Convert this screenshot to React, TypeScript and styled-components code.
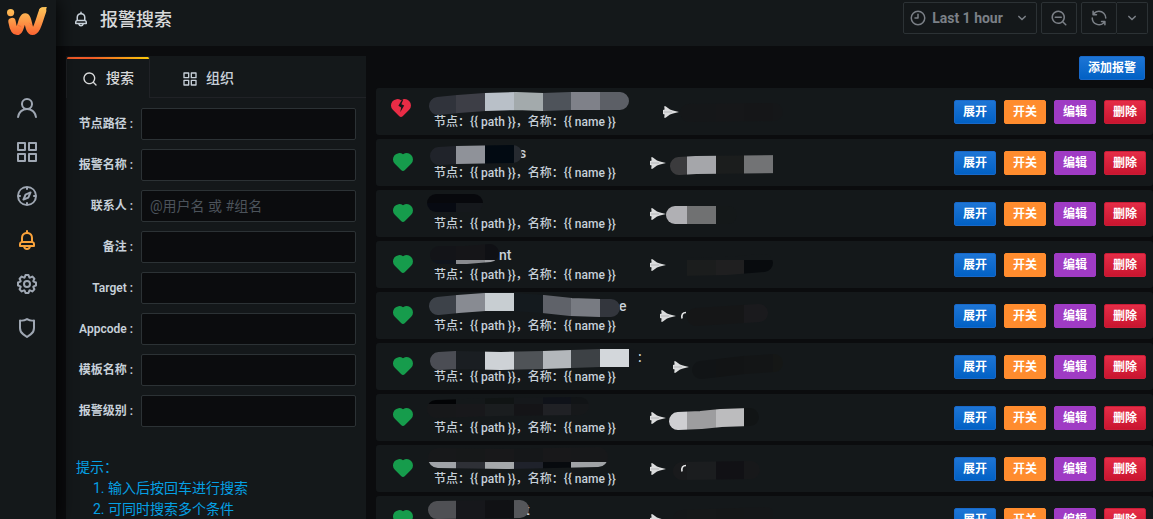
import React, { useId } from 'react';
import styled, { createGlobalStyle } from 'styled-components';

const GlobalStyle = createGlobalStyle`
  *, *::before, *::after { box-sizing: border-box; }
  html, body, #root { height: 100%; }
  body {
    margin: 0;
    overflow: hidden;
    background: #0b0c0e;
    color: #c7d0d9;
    font-family: Roboto, "Noto Sans CJK SC", sans-serif;
    font-size: 14px;
    line-height: 21px;
  }
  button, input { font: inherit; color: inherit; }
`;

/* ---------- icons ---------- */

const icons = {
  user: 'M15.71,12.71a6,6,0,1,0-7.42,0,10,10,0,0,0-6.22,8.18,1,1,0,0,0,2,.22,8,8,0,0,1,15.9,0,1,1,0,0,0,1,.89h.11a1,1,0,0,0,.88-1.1A10,10,0,0,0,15.71,12.71ZM12,12a4,4,0,1,1,4-4A4,4,0,0,1,12,12Z',
  apps: 'M10,13H3a1,1,0,0,0-1,1v7a1,1,0,0,0,1,1h7a1,1,0,0,0,1-1V14A1,1,0,0,0,10,13ZM9,20H4V15H9ZM21,2H14a1,1,0,0,0-1,1v7a1,1,0,0,0,1,1h7a1,1,0,0,0,1-1V3A1,1,0,0,0,21,2ZM20,9H15V4h5Zm1,4H14a1,1,0,0,0-1,1v7a1,1,0,0,0,1,1h7a1,1,0,0,0,1-1V14A1,1,0,0,0,21,13Zm-1,7H15V15h5ZM10,2H3A1,1,0,0,0,2,3v7a1,1,0,0,0,1,1h7a1,1,0,0,0,1-1V3A1,1,0,0,0,10,2ZM9,9H4V4H9Z',
  compass:
    'M12,2A10,10,0,1,0,22,12,10,10,0,0,0,12,2Zm1,17.93V19a1,1,0,0,0-2,0v.93A8,8,0,0,1,4.07,13H5a1,1,0,0,0,0-2H4.07A8,8,0,0,1,11,4.07V5a1,1,0,0,0,2,0V4.07A8,8,0,0,1,19.93,11H19a1,1,0,0,0,0,2h.93A8,8,0,0,1,13,19.93ZM15.14,7.55l-5,2.12a1,1,0,0,0-.52.52l-2.12,5a1,1,0,0,0,.21,1.1,1,1,0,0,0,.7.3.93.93,0,0,0,.4-.09l5-2.12a1,1,0,0,0,.52-.52l2.12-5a1,1,0,0,0-1.31-1.31Zm-2.49,5.1-2.28,1,1-2.28,2.28-1Z',
  bell: 'M18,13.18V10a6,6,0,0,0-5-5.91V3a1,1,0,0,0-2,0V4.09A6,6,0,0,0,6,10v3.18A3,3,0,0,0,4,16v2a1,1,0,0,0,1,1H8.14a4,4,0,0,0,7.72,0H19a1,1,0,0,0,1-1V16A3,3,0,0,0,18,13.18ZM8,10a4,4,0,0,1,8,0v3H8Zm4,10a2,2,0,0,1-1.72-1h3.44A2,2,0,0,1,12,20Zm6-3H6V16a1,1,0,0,1,1-1H17a1,1,0,0,1,1,1Z',
  cog: 'M21.32,9.55l-1.89-.63.89-1.78A1,1,0,0,0,20.13,6L18,3.87a1,1,0,0,0-1.15-.19l-1.78.89-.63-1.89A1,1,0,0,0,13.5,2h-3a1,1,0,0,0-.95.68L8.92,4.57,7.14,3.68A1,1,0,0,0,6,3.87L3.87,6a1,1,0,0,0-.19,1.15l.89,1.78-1.89.63A1,1,0,0,0,2,10.5v3a1,1,0,0,0,.68.95l1.89.63-.89,1.78A1,1,0,0,0,3.87,18L6,20.13a1,1,0,0,0,1.15.19l1.78-.89.63,1.89a1,1,0,0,0,.95.68h3a1,1,0,0,0,.95-.68l.63-1.89,1.78.89A1,1,0,0,0,18,20.13L20.13,18a1,1,0,0,0,.19-1.15l-.89-1.78,1.89-.63A1,1,0,0,0,22,13.5v-3A1,1,0,0,0,21.32,9.55ZM20,12.78l-1.2.4A2,2,0,0,0,17.64,16l.57,1.14-1.1,1.1L16,17.64a2,2,0,0,0-2.79,1.16l-.4,1.2H11.22l-.4-1.2A2,2,0,0,0,8,17.64l-1.14.57-1.1-1.1L6.36,16A2,2,0,0,0,5.2,13.18L4,12.78V11.22l1.2-.4A2,2,0,0,0,6.36,8L5.79,6.89l1.1-1.1L8,6.36A2,2,0,0,0,10.82,5.2l.4-1.2h1.56l.4,1.2A2,2,0,0,0,16,6.36l1.14-.57,1.1,1.1L17.64,8a2,2,0,0,0,1.16,2.79l1.2.4ZM12,8a4,4,0,1,0,4,4A4,4,0,0,0,12,8Zm0,6a2,2,0,1,1,2-2A2,2,0,0,1,12,14Z',
  shield:
    'M19.63,3.65a1,1,0,0,0-.84-.2,8,8,0,0,1-6.22-1.27,1,1,0,0,0-1.14,0A8,8,0,0,1,5.21,3.45a1,1,0,0,0-.84.2A1,1,0,0,0,4,4.43v7.45a9,9,0,0,0,3.77,7.33l3.65,2.6a1,1,0,0,0,1.16,0l3.65-2.6A9,9,0,0,0,20,11.88V4.43A1,1,0,0,0,19.63,3.65ZM18,11.88a7,7,0,0,1-2.93,5.7L12,19.77,8.93,17.58A7,7,0,0,1,6,11.88V5.58a10,10,0,0,0,6-1.39,10,10,0,0,0,6,1.39Z',
  search:
    'M21.71,20.29,18,16.61A9,9,0,1,0,16.61,18l3.68,3.68a1,1,0,0,0,1.42,0A1,1,0,0,0,21.71,20.29ZM11,18a7,7,0,1,1,7-7A7,7,0,0,1,11,18Z',
  searchMinus:
    'M21.71,20.29,18,16.61A9,9,0,1,0,16.61,18l3.68,3.68a1,1,0,0,0,1.42,0A1,1,0,0,0,21.71,20.29ZM11,18a7,7,0,1,1,7-7A7,7,0,0,1,11,18Zm4-8H7a1,1,0,0,0,0,2h8a1,1,0,0,0,0-2Z',
  clock:
    'M12,2A10,10,0,1,0,22,12,10,10,0,0,0,12,2Zm0,18a8,8,0,1,1,8-8A8,8,0,0,1,12,20ZM12,6a1,1,0,0,0-1,1v4H8a1,1,0,0,0,0,2h4a1,1,0,0,0,1-1V7A1,1,0,0,0,12,6Z',
  angleDown:
    'M17,9.17a1,1,0,0,0-1.41,0L12,12.71,8.46,9.17a1,1,0,0,0-1.41,0,1,1,0,0,0,0,1.42l4.24,4.24a1,1,0,0,0,1.42,0L17,10.59A1,1,0,0,0,17,9.17Z',
  sync: 'M19.91,15.51H15.38a1,1,0,0,0,0,2h2.4A8,8,0,0,1,4,12a1,1,0,0,0-2,0,10,10,0,0,0,16.88,7.23V21a1,1,0,0,0,2,0V16.5A1,1,0,0,0,19.91,15.51ZM12,2A10,10,0,0,0,5.12,4.77V3a1,1,0,0,0-2,0V7.5a1,1,0,0,0,1,1h4.5a1,1,0,0,0,0-2H6.22A8,8,0,0,1,20,12a1,1,0,0,0,2,0A10,10,0,0,0,12,2Z',
  heart:
    'M20.16,5A6.29,6.29,0,0,0,12,4.36a6.27,6.27,0,0,0-8.16,9.48l6.21,6.22a2.78,2.78,0,0,0,3.9,0l6.21-6.22A6.27,6.27,0,0,0,20.16,5Z',
};

type IconName = keyof typeof icons;

const IconSvg = styled.svg`
  display: block;
  flex: none;
  fill: currentColor;
`;

const Icon = ({ name, size }: { name: IconName; size: number }) => (
  <IconSvg width={size} height={size} viewBox="0 0 24 24" aria-hidden="true">
    <path d={icons[name]} />
  </IconSvg>
);

const Logo = () => (
  <IconSvg width="42" height="32" viewBox="0 0 42 32" role="img" aria-label="logo">
    <defs>
      <linearGradient id="logo-fill" gradientUnits="userSpaceOnUse" x1="0" y1="0" x2="0" y2="30">
        <stop offset="0" stopColor="#fcc85a" />
        <stop offset="0.5" stopColor="#fd9a48" />
        <stop offset="1" stopColor="#fb5f30" />
      </linearGradient>
    </defs>
    <circle cx="4.6" cy="6.6" r="3.6" fill="url(#logo-fill)" />
    <path
      fill="none"
      stroke="url(#logo-fill)"
      strokeWidth="7.4"
      strokeLinecap="round"
      strokeLinejoin="round"
      d="M6 15.600 C7 22 8.500 25.400 11 25.400 C15 25.400 15.500 11 19.200 11 C22.800 11 22 25.400 26.400 25.400 C31 25.400 33 15 36.600 5"
    />
    <path fill="url(#logo-fill)" d="M33 4 C34 1.400 37 0.800 40.800 1 L38.500 9 Z" />
    <path d="M11 19.500 Q14 18.500 16 21.500 Q14 20.500 11 19.500Z M22.500 16.500 Q25 20 28.500 20.500 Q25 18.500 22.500 16.500Z" fill="#f4552a" opacity="0.6" />
  </IconSvg>
);

const BrokenHeart = () => (
  <IconSvg width="24" height="24" viewBox="0 0 24 24" role="img" aria-label="异常">
    <path d={icons.heart} />
    <path
      d="M13.2 3.200 L9.400 9.800 L12.200 11.600 L11.200 16.200 L15.200 9.600 L12.400 8.200 L14.200 3.800Z"
      fill="#14181a"
    />
  </IconSvg>
);

const Plane = () => (
  <IconSvg width="16" height="12" viewBox="0 0 16 12" aria-hidden="true">
    <path
      fill="#dcddde"
      d="M1.200 0.300 L2.600 0.300 L7 3.600 L10 4.600 L16 6 L10 7.400 L7 8.400 L2.600 11.700 L1.200 11.700 L1.600 8.600 L0 8 V4 L1.600 3.400Z"
    />
    <path d="M1 6 H9" stroke="#9a9c9f" strokeWidth="0.6" />
  </IconSvg>
);

/* ---------- side menu ---------- */

const Layout = styled.div`
  display: flex;
  height: 100%;
`;

const SideMenu = styled.nav`
  flex: none;
  width: 56px;
  padding: 6px 2px 0 0;
  display: flex;
  flex-direction: column;
  align-items: center;
  background: #14181a;
  box-shadow: 0 0 20px #000;
  z-index: 1;
`;

const LogoLink = styled.a`
  display: block;
  margin-bottom: 48px;
`;

const SideLink = styled.a<{ $active?: boolean }>`
  display: flex;
  align-items: center;
  justify-content: center;
  width: 44px;
  height: 44px;
  color: ${(p) => (p.$active ? '#f9a23b' : '#9fa7b3')};
`;

/* ---------- header ---------- */

const Page = styled.div`
  flex: 1;
  min-width: 0;
  display: flex;
  flex-direction: column;
`;

const Header = styled.header`
  flex: none;
  display: flex;
  align-items: flex-start;
  justify-content: space-between;
  height: 46px;
  padding: 2px 5px 0 16px;
  background: #14181a;
`;

const Heading = styled.div`
  display: flex;
  align-items: center;
  gap: 10px;
  height: 34px;
`;

const Title = styled.h1`
  margin: 0;
  padding-top: 2px;
  font-size: 18px;
  font-weight: 500;
  line-height: 24px;
  color: #d8d9da;
`;

const Toolbar = styled.div`
  display: flex;
  gap: 4px;
  color: #7b8087;
`;

const ToolGroup = styled.div`
  display: flex;
`;

const ToolButton = styled.button<{ $width: number; $joined?: boolean }>`
  display: flex;
  align-items: center;
  justify-content: center;
  width: ${(p) => p.$width}px;
  height: 32px;
  padding: 0;
  background: #14181a;
  border: 1px solid #2c3235;
  border-left-width: ${(p) => (p.$joined ? 0 : 1)}px;
  border-radius: ${(p) => (p.$joined ? '0 2px 2px 0' : '2px')};
  font-weight: 700;
`;

const TimeText = styled.span`
  margin: 0 10px 0 5px;
`;

/* ---------- search panel ---------- */

const Content = styled.main`
  flex: 1;
  min-height: 0;
  display: flex;
  gap: 10px;
  padding: 10px 0 0 10px;
`;

const Panel = styled.section`
  flex: none;
  width: 300px;
  background: #14181a;
`;

const TabList = styled.div`
  display: flex;
  height: 42px;
  padding-top: 1px;
  box-shadow: inset 0 -1px 0 #202226;
`;

const Tab = styled.button<{ $active?: boolean }>`
  display: flex;
  align-items: center;
  gap: 8px;
  padding: 2px 15px 0;
  border: 1px solid transparent;
  border-width: 0 1px;
  margin-right: 16px;
  background: none;
  font-weight: 500;
  color: #c7d0d9;
  ${(p) =>
    p.$active &&
    `
    border-color: #202226;
    border-radius: 2px 2px 0 0;
    color: #d8d9da;
    background: linear-gradient(90deg, #f05a28 30%, #fbca0a 99%) top / 100% 2px no-repeat, #14181a;
    background-origin: border-box;
  `}
`;

const SearchForm = styled.form`
  display: flex;
  flex-direction: column;
  gap: 9px;
  padding: 10px;
`;

const Field = styled.div`
  display: flex;
  align-items: center;
  gap: 8px;
`;

const Label = styled.label`
  width: 57px;
  text-align: right;
  white-space: nowrap;
  font-size: 12px;
  font-weight: 600;
`;

const Input = styled.input`
  flex: 1;
  min-width: 0;
  height: 32px;
  padding: 0 8px;
  background: #0b0c0e;
  border: 1px solid #2c3235;
  border-radius: 2px;
  outline: none;
  &::placeholder {
    color: #4c535b;
    opacity: 1;
  }
`;

const Tips = styled.div`
  padding: 20px 10px;
  color: #05a0e4;
`;

const TipList = styled.ol`
  margin: 0;
  padding-left: 32px;
`;

/* ---------- alert list ---------- */

const ListArea = styled.section`
  flex: 1;
  min-width: 0;
`;

const ListActions = styled.div`
  display: flex;
  justify-content: flex-end;
  padding: 0 8px 8px 0;
`;

const tones = {
  blue: ['linear-gradient(#1f76d6, #0060c4)', '#1868c8'],
  orange: ['#ff8c2e', '#ff8c2e'],
  purple: ['#9f3bc4', '#9f3bc4'],
  red: ['linear-gradient(#e62e48, #c8142e)', '#c81c36'],
};

const Button = styled.button<{ $tone: keyof typeof tones }>`
  height: 24px;
  padding: 0 8px;
  background: ${(p) => tones[p.$tone][0]};
  background-origin: border-box;
  border: 1px solid ${(p) => tones[p.$tone][1]};
  border-radius: 2px;
  color: #fff;
  font-size: 12px;
  font-weight: 700;
  line-height: 20px;
  white-space: nowrap;
`;

const Rows = styled.ul`
  display: flex;
  flex-direction: column;
  gap: 4px;
  margin: 0;
  padding: 0;
  list-style: none;
`;

const Row = styled.li`
  position: relative;
  display: flex;
  align-items: center;
  height: 47px;
  padding: 0 7px 0 13px;
  background: #14181a;
  border-radius: 3px;
`;

const Status = styled.div<{ $broken: boolean }>`
  width: 45px;
  padding-left: ${(p) => (p.$broken ? 0 : 2)}px;
  padding-bottom: ${(p) => (p.$broken ? 8 : 2)}px;
  color: ${(p) => (p.$broken ? '#e92c46' : '#169c4c')};
`;

const Summary = styled.div`
  width: 200px;
  padding-top: 2px;
`;

const Name = styled.div<{ $indent: number }>`
  height: 19px;
  padding-left: ${(p) => p.$indent}px;
  font-weight: 500;
  line-height: 17px;
`;

const Detail = styled.div`
  font-size: 12px;
  font-weight: 500;
  line-height: 18px;
  white-space: nowrap;
`;

const Receiver = styled.div<{ $indent: number }>`
  flex: 1;
  padding-left: ${(p) => p.$indent}px;
`;

const RowButtons = styled.div`
  display: flex;
  gap: 8px;
`;

const Smear = styled.svg`
  position: absolute;
  left: 0;
  top: 0;
  pointer-events: none;
`;

/* Column edges of the mosaic grid, measured from the left of a row. */
const edges = [45, 80, 109, 138, 167, 195, 224, 253, 282, 311, 340, 368, 397, 430];

type Mark = {
  path: string;
  from: number;
  colors: string[];
  lower?: string[];
  split?: number;
  width?: number;
};

const Mosaic = ({ marks }: { marks: Mark[] }) => {
  const id = useId();
  return (
    <Smear width="440" height="47" aria-hidden="true">
      {marks.map((m, i) => (
        <g key={i}>
          <mask id={`${id}${i}`} maskUnits="userSpaceOnUse" x="0" y="0" width="440" height="47">
            <path
              d={m.path}
              fill="none"
              stroke="#fff"
              strokeWidth={m.width ?? 18}
              strokeLinecap="round"
              strokeLinejoin="round"
            />
          </mask>
          <g mask={`url(#${id}${i})`} shapeRendering="crispEdges">
            {m.colors.map((c, k) => {
              const x = edges[m.from + k];
              return <rect key={k} x={x} y="0" width={edges[m.from + k + 1] - x} height={m.split ?? 47} fill={c} />;
            })}
            {m.lower?.map((c, k) => {
              const x = edges[m.from + k];
              return (
                <rect key={k} x={x} y={m.split} width={edges[m.from + k + 1] - x} height={47 - (m.split ?? 0)} fill={c} />
              );
            })}
          </g>
        </g>
      ))}
    </Smear>
  );
};

type Alert = { broken?: boolean; name?: string; indent?: number; plane: number; marks: Mark[]; hook?: boolean };

const alerts: Alert[] = [
  {
    broken: true,
    plane: 29,
    marks: [
      {
        path: 'M62 18 L82 16 L109 14 L140 13 L167 14 L195 13 L244 13',
        from: 0,
        colors: ['#30333b', '#3d3e46', '#b9c0c8', '#a3aaac', '#4e535a', '#7f8189', '#5c5f66'],
      },
      { path: 'M313 25 L398 24', from: 8, colors: ['#151719', '#151719', '#161719', '#151618', '#151719'] },
    ],
  },
  {
    name: 's',
    indent: 85,
    plane: 16,
    marks: [
      { path: 'M63 17 L80 16 L137 15', from: 0, colors: ['#20232a', '#8f9299', '#020a12', '#262a30'] },
      { path: 'M303 27 L320 26 L410 25', from: 8, colors: ['#3b3b3d', '#a5a6aa', '#1b1d1d', '#727375'] },
    ],
  },
  {
    plane: 16,
    marks: [
      { path: 'M60 13 L98 13', from: 0, colors: ['#07080c', '#07080c'], lower: ['#070a12', '#15181c'], split: 13 },
      { path: 'M299 25 L352 25', from: 8, colors: ['#b0b0b4', '#707172', '#141819'] },
    ],
  },
  {
    name: 'nt',
    indent: 65,
    plane: 16,
    marks: [
      {
        path: 'M63 14 L90 14 L114 12',
        from: 0,
        colors: ['#131418', '#151518', '#0f1014'],
        lower: ['#0f141c', '#8a8c90', '#a0a2a6'],
        split: 19,
      },
      {
        path: 'M300 26 L350 25 L388 22',
        from: 9,
        colors: ['#14181a', '#14181a', '#14181a'],
        lower: ['#1b1d1d', '#1f1f20', '#080b0e'],
        split: 19,
      },
    ],
  },
  {
    name: 'e',
    indent: 185,
    plane: 26,
    hook: true,
    marks: [
      {
        path: 'M62 14 L82 12 L109 10 L138 10 L167 12 L195 15 L224 16 L235 16',
        from: 0,
        colors: ['#3d4249', '#888b92', '#c8ced2', '#141a1e', '#5f6269', '#787b82', '#33363d', '#33363d'],
      },
      { path: 'M320 25 L383 21', from: 8, colors: ['#141618', '#151617', '#151617', '#1a1a1d'] },
    ],
  },
  {
    name: ':',
    indent: 204,
    plane: 39,
    marks: [
      {
        path: 'M63 18 L80 17 L125 18 L167 17 L224 15 L254 15',
        from: 0,
        colors: ['#4b4d54', '#1a1e22', '#ced2d6', '#4f5357', '#b3b7bb', '#3d4145', '#d3d7db', '#14171b'],
      },
      { path: 'M325 27 L368 22 L398 20', from: 9, colors: ['#111416', '#121415', '#131516', '#151716'] },
    ],
  },
  {
    plane: 16,
    marks: [
      {
        path: 'M60 15 L120 13 L204 12',
        from: 0,
        colors: ['#020305', '#14181a', '#101414', '#15181b', '#0f1219', '#111416'],
        lower: ['#17181a', '#18181b', '#1a1d1f', '#141417', '#202125', '#16181a'],
        split: 10,
      },
      {
        path: 'M302 27 L325 26 L345 24 L374 23',
        from: 8,
        colors: ['#cfcfd2', '#9d9d9f', '#bcbcbe', '#111415'],
      },
    ],
  },
  {
    plane: 16,
    hook: true,
    marks: [
      {
        path: 'M62 13 L130 14 L222 12',
        from: 0,
        width: 20,
        colors: ['#17181a', '#161819', '#18181a', '#151719', '#18181a', '#17181a', '#17181a'],
        lower: ['#a0a3a8', '#2e3036', '#a5a8ab', '#1f222b', '#070a0e', '#a0a3a6', '#a0a3a6'],
        split: 17,
      },
      { path: 'M306 26 L375 25', from: 8, colors: ['#191a1c', '#1b1d1f', '#111115', '#17181a'] },
    ],
  },
  {
    name: 't',
    indent: 91,
    plane: 16,
    marks: [
      { path: 'M61 14 L144 13', from: 0, colors: ['#4f5054', '#16171b', '#101114', '#55565a'] },
      { path: 'M306 23 L390 20', from: 8, colors: ['#151719', '#161819', '#151718', '#151719'] },
    ],
  },
];

const fields = [
  { id: 'path', label: '节点路径' },
  { id: 'name', label: '报警名称' },
  { id: 'contact', label: '联系人', placeholder: '@用户名 或 #组名' },
  { id: 'remark', label: '备注' },
  { id: 'target', label: 'Target' },
  { id: 'appcode', label: 'Appcode' },
  { id: 'template', label: '模板名称' },
  { id: 'level', label: '报警级别' },
];

const menu: { icon: IconName; label: string; active?: boolean }[] = [
  { icon: 'user', label: '用户' },
  { icon: 'apps', label: '面板' },
  { icon: 'compass', label: '探索' },
  { icon: 'bell', label: '报警', active: true },
  { icon: 'cog', label: '设置' },
  { icon: 'shield', label: '管理' },
];

const HookSvg = styled(Smear)`
  left: 304px;
`;

const AlertRow = ({ alert }: { alert: Alert }) => (
  <Row>
    <Status $broken={!!alert.broken}>{alert.broken ? <BrokenHeart /> : <Icon name="heart" size={24} />}</Status>
    <Summary>
      <Name $indent={alert.indent ?? 0}>{alert.name}</Name>
      <Detail>{'节点：{{ path }}，名称：{{ name }}'}</Detail>
    </Summary>
    <Receiver $indent={alert.plane}>
      <Plane />
    </Receiver>
    <Mosaic marks={alert.marks} />
    {alert.hook && (
      <HookSvg width="8" height="47" aria-hidden="true">
        <path d="M6 20.500 Q1 20.500 2 26.500" fill="none" stroke="#e2e3e4" strokeWidth="1.600" />
      </HookSvg>
    )}
    <RowButtons>
      <Button $tone="blue">展开</Button>
      <Button $tone="orange">开关</Button>
      <Button $tone="purple">编辑</Button>
      <Button $tone="red">删除</Button>
    </RowButtons>
  </Row>
);

export default function App() {
  return (
    <Layout>
      <GlobalStyle />
      <SideMenu>
        <LogoLink href="#">
          <Logo />
        </LogoLink>
        {menu.map((m) => (
          <SideLink key={m.icon} href="#" aria-label={m.label} $active={m.active}>
            <Icon name={m.icon} size={24} />
          </SideLink>
        ))}
      </SideMenu>
      <Page>
        <Header>
          <Heading>
            <Icon name="bell" size={18} />
            <Title>报警搜索</Title>
          </Heading>
          <Toolbar>
            <ToolButton $width={134}>
              <Icon name="clock" size={18} />
              <TimeText>Last 1 hour</TimeText>
              <Icon name="angleDown" size={18} />
            </ToolButton>
            <ToolButton $width={36} aria-label="缩小">
              <Icon name="searchMinus" size={18} />
            </ToolButton>
            <ToolGroup>
              <ToolButton $width={36} aria-label="刷新">
                <Icon name="sync" size={18} />
              </ToolButton>
              <ToolButton $width={31} $joined aria-label="刷新间隔">
                <Icon name="angleDown" size={18} />
              </ToolButton>
            </ToolGroup>
          </Toolbar>
        </Header>
        <Content>
          <Panel>
            <TabList role="tablist">
              <Tab role="tab" aria-selected="true" $active>
                <Icon name="search" size={16} />
                搜索
              </Tab>
              <Tab role="tab" aria-selected="false">
                <Icon name="apps" size={16} />
                组织
              </Tab>
            </TabList>
            <SearchForm>
              {fields.map((f) => (
                <Field key={f.id}>
                  <Label htmlFor={f.id}>{f.label} :</Label>
                  <Input id={f.id} placeholder={f.placeholder} />
                </Field>
              ))}
            </SearchForm>
            <Tips>
              提示：
              <TipList>
                <li>输入后按回车进行搜索</li>
                <li>可同时搜索多个条件</li>
              </TipList>
            </Tips>
          </Panel>
          <ListArea>
            <ListActions>
              <Button $tone="blue">添加报警</Button>
            </ListActions>
            <Rows>
              {alerts.map((a, i) => (
                <AlertRow key={i} alert={a} />
              ))}
            </Rows>
          </ListArea>
        </Content>
      </Page>
    </Layout>
  );
}
